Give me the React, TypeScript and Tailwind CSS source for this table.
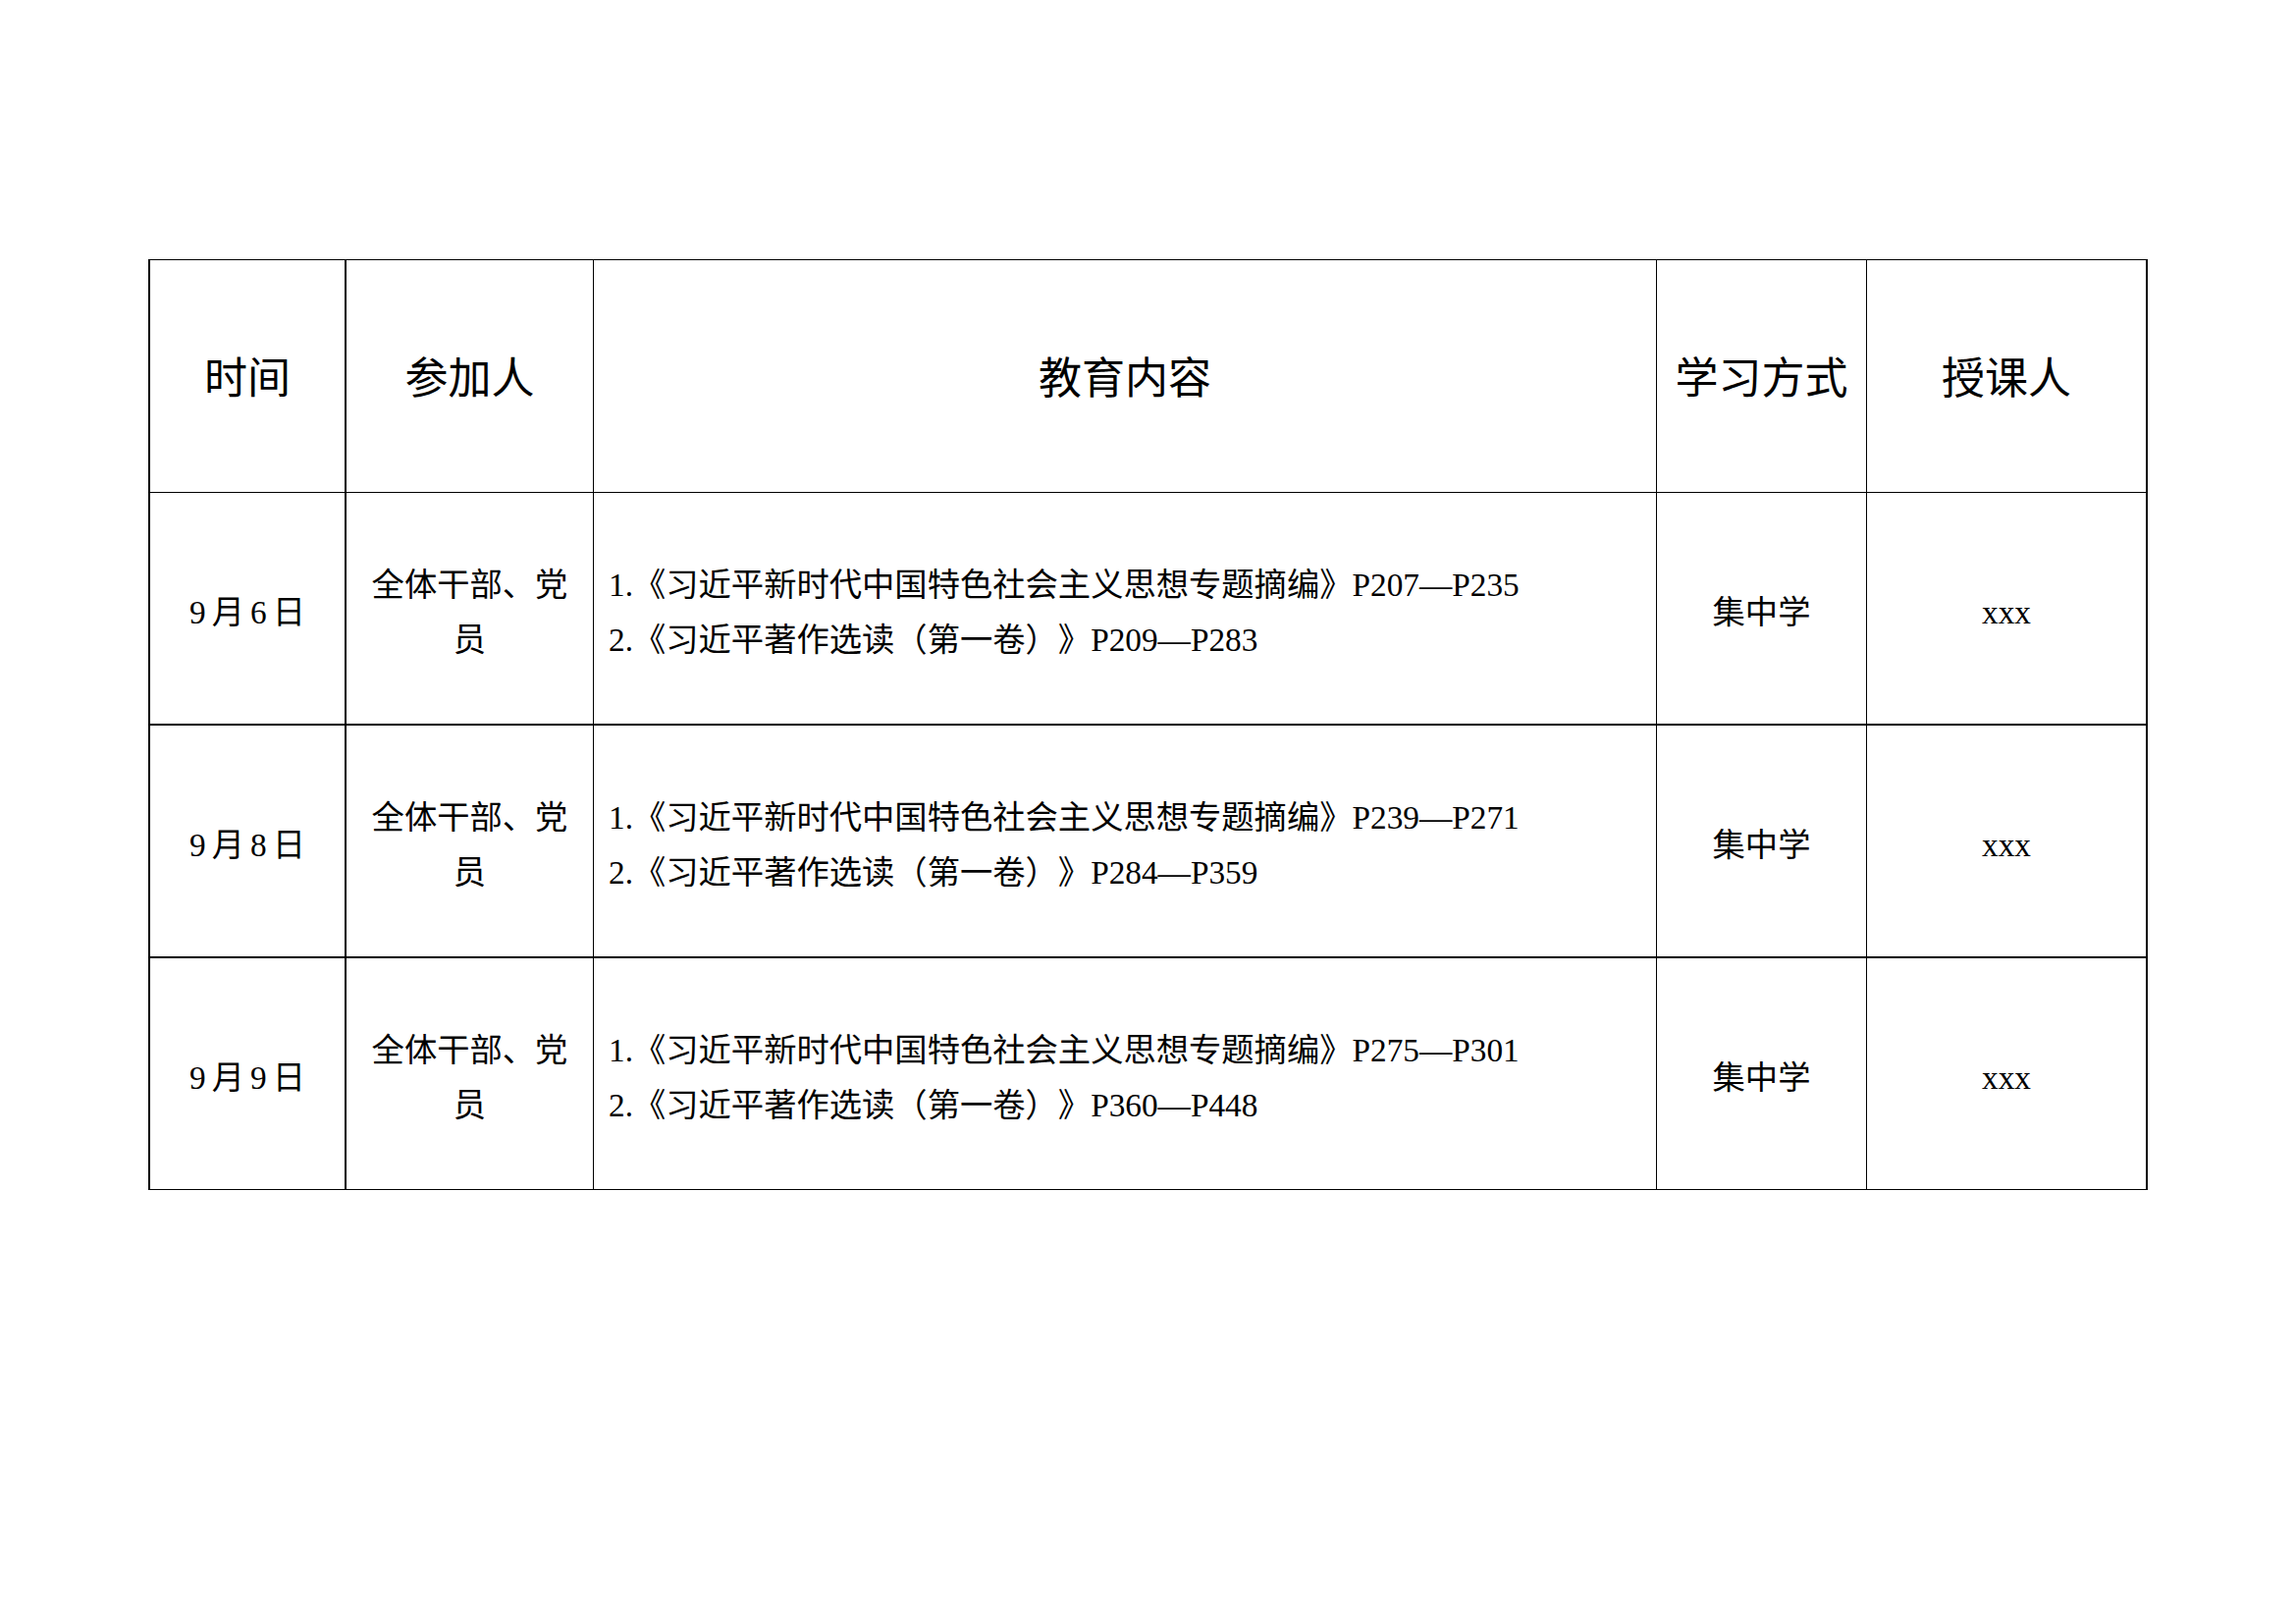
import React from "react";

const FONT = '"Liberation Serif", "Noto Sans CJK SC", serif';

type Row = {
  month: string;
  day: string;
  l1: string;
  l2: string;
};

const rows: Row[] = [
  { month: "9", day: "6", l1: "P207—P235", l2: "P209—P283" },
  { month: "9", day: "8", l1: "P239—P271", l2: "P284—P359" },
  { month: "9", day: "9", l1: "P275—P301", l2: "P360—P448" },
];

function Header() {
  return (
    <div className="flex border-b border-black text-[44px] h-[237px]">
      <div className="w-[200px] pt-[8px] border-r-2 border-black flex items-center justify-center">时间</div>
      <div className="w-[252px] pt-[8px] border-r border-black flex items-center justify-center">参加人</div>
      <div className="w-[1083px] pt-[8px] border-r border-black flex items-center justify-center">教育内容</div>
      <div className="w-[214px] pt-[8px] border-r border-black flex items-center justify-center">学习方式</div>
      <div className="w-[286px] pt-[8px] border-r-2 border-black flex items-center justify-center">授课人</div>
    </div>
  );
}

function BodyRow({ r, last }: { r: Row; last: boolean }) {
  return (
    <div
      className={
        last
          ? "flex border-b border-black text-[33.3px] leading-[56px] h-[236px]"
          : "flex border-b-2 border-black text-[33.3px] leading-[56px] h-[237px]"
      }
    >
      <div className="w-[200px] pt-[8px] border-r-2 border-black flex items-center justify-center">
        <div className="flex gap-[6px]">
          <span>{r.month}</span>
          <span>月</span>
          <span>{r.day}</span>
          <span>日</span>
        </div>
      </div>
      <div className="w-[252px] pt-[8px] border-r border-black flex flex-col items-center justify-center text-center">
        <span>全体干部、党</span>
        <span>员</span>
      </div>
      <div className="w-[1083px] pt-[8px] border-r border-black flex flex-col justify-center pl-[15px] [text-spacing-trim:space-all]">
        <span className="whitespace-nowrap">1.《习近平新时代中国特色社会主义思想专题摘编》{r.l1}</span>
        <span className="whitespace-nowrap">2.《习近平著作选读（第一卷）》{r.l2}</span>
      </div>
      <div className="w-[214px] pt-[8px] border-r border-black flex items-center justify-center">集中学</div>
      <div className="w-[286px] pt-[8px] border-r-2 border-black flex items-center justify-center">xxx</div>
    </div>
  );
}

export default function App() {
  return (
    <div
      className="w-[2339px] h-[1654px] bg-white text-black pt-[264px] pl-[151px]"
      style={{ fontFamily: FONT }}
    >
      <div className="w-[2037px] border-t border-l-2 border-black">
        <Header />
        {rows.map((r, i) => (
          <BodyRow key={i} r={r} last={i === rows.length - 1} />
        ))}
      </div>
    </div>
  );
}
